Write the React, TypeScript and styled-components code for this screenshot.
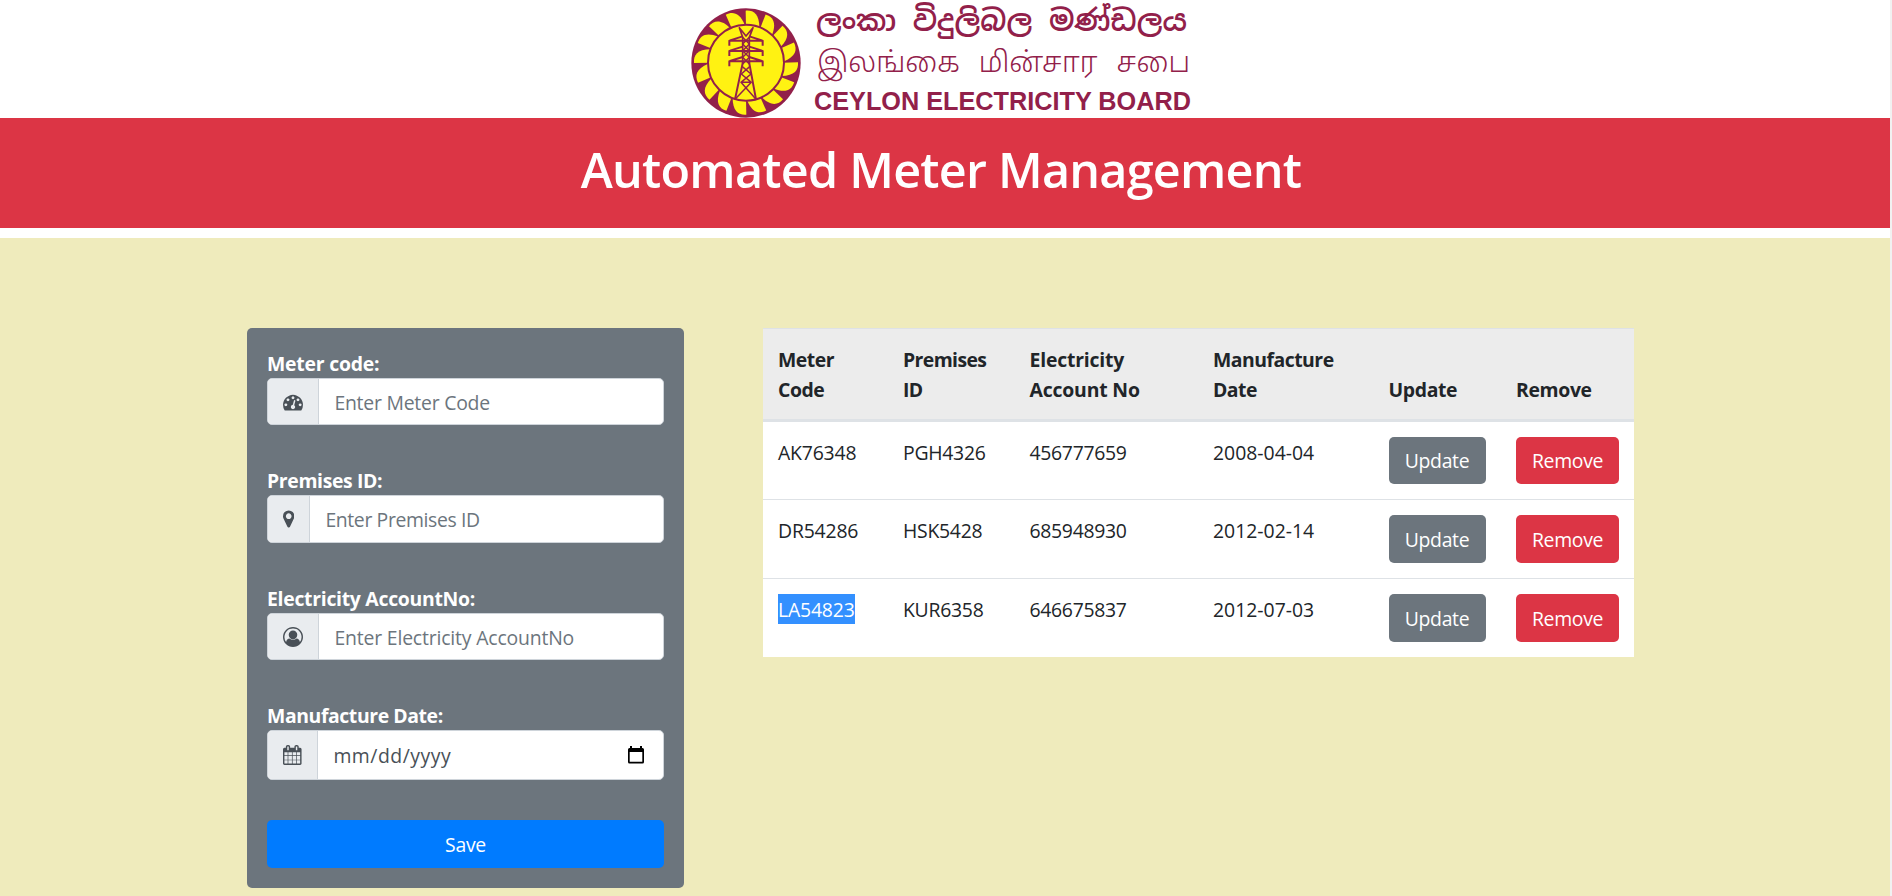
import React from "react";
import styled, { createGlobalStyle } from "styled-components";

const GlobalStyle = createGlobalStyle`
  *, *::before, *::after { box-sizing: border-box; }
  body {
    margin: 0;
    background: #fff;
    color: #212529;
    font-family: "Open Sans", "Noto Sans", sans-serif;
    font-size: 19.4px;
    line-height: 30px;
  }
`;

const Page = styled.div`
  height: 896px;
  display: flex;
  flex-direction: column;
  overflow: hidden;
  border-right: 2px solid #f1f1f1;
`;

const Brand = styled.header`
  height: 118px;
  flex: none;
  display: flex;
  padding-left: 680px;
  overflow: hidden;
  color: #92204a;
`;

const Emblem = styled.svg`
  width: 130px;
  height: 125px;
  flex: none;
`;

const BrandNames = styled.div`
  display: flex;
  flex-direction: column;
  padding-left: 4px;
  white-space: nowrap;
`;

const BrandName = styled.span<{ $size: number; $line: number; $gap?: number; $indent?: number; $weight: number }>`
  font-size: ${(p) => p.$size}px;
  line-height: ${(p) => p.$line}px;
  height: ${(p) => p.$line}px;
  padding-left: ${(p) => p.$indent ?? 0}px;
  word-spacing: ${(p) => p.$gap ?? 0}px;
  font-weight: ${(p) => p.$weight};
  font-family: "Liberation Sans", "Noto Sans Sinhala", "Noto Sans Tamil", sans-serif;
`;

const Banner = styled.div`
  height: 110px;
  flex: none;
  background: #dc3545;
  display: flex;
  justify-content: center;
  padding-top: 21px;
  padding-right: 8px;
`;

const Title = styled.h1`
  margin: 0;
  color: #fff;
  font-size: 48.5px;
  line-height: 60px;
  font-weight: 600;
  letter-spacing: -0.75px;
  white-space: nowrap;
`;

const Content = styled.main`
  flex: 1;
  margin-top: 10px;
  background: #efebbc;
  display: flex;
  align-items: flex-start;
  gap: 79px;
  padding: 90px 0 0 247px;
`;

const FormCard = styled.form`
  width: 437px;
  padding: 19.8px 20px 20px;
  border-radius: 5px;
  background: #6c757d;
  display: flex;
  flex-direction: column;
`;

const Field = styled.div`
  margin-bottom: 40px;
`;

const Label = styled.label<{ $spacing: number }>`
  display: block;
  height: 30px;
  padding-top: 1px;
  color: #fff;
  font-weight: 700;
  letter-spacing: ${(p) => p.$spacing}px;
`;

const InputGroup = styled.div<{ $height: number }>`
  height: ${(p) => p.$height}px;
  display: flex;
  border: 1px solid #ced4da;
  border-radius: 5px;
  background: #fff;
  overflow: hidden;
`;

const Addon = styled.span<{ $width: number }>`
  width: ${(p) => p.$width}px;
  flex: none;
  display: flex;
  align-items: center;
  justify-content: center;
  background: #e9ecef;
  border-right: 1px solid #ced4da;
  color: #495057;
`;

const Icon = styled.svg`
  height: 20px;
  flex: none;
  fill: currentColor;
`;

const Control = styled.span<{ $spacing: number; $dark?: boolean }>`
  flex: 1;
  display: flex;
  align-items: center;
  justify-content: space-between;
  padding: 2.2px 19px 0 15.4px;
  color: ${(p) => (p.$dark ? "#495057" : "#6c757d")};
  letter-spacing: ${(p) => p.$spacing}px;
`;

const PickerIcon = styled.svg`
  width: 16px;
  height: 18px;
  margin-bottom: 2px;
`;

const Button = styled.button<{ $tone: string; $width?: number }>`
  display: block;
  width: ${(p) => (p.$width ? `${p.$width}px` : "100%")};
  height: 48px;
  border: 0;
  border-radius: 5px;
  padding: 2px 0 0;
  background: ${(p) => p.$tone};
  color: #fff;
  font: inherit;
  letter-spacing: -0.3px;
`;

const Table = styled.table`
  width: 871px;
  table-layout: fixed;
  border-collapse: separate;
  border-spacing: 0;
  background: #fff;
`;

const HeadCell = styled.th<{ $width: number; $spacing: number }>`
  width: ${(p) => p.$width}px;
  height: 94px;
  padding: 16px 14px 14px 15px;
  border-top: 1px solid #dee2e6;
  border-bottom: 3px solid #dee2e6;
  background: #ececec;
  font-weight: 700;
  text-align: left;
  vertical-align: bottom;
  white-space: pre-line;
  letter-spacing: ${(p) => p.$spacing}px;
`;

const Row = styled.tr`
  & + & > td {
    border-top: 1px solid #dee2e6;
  }
  &:first-child ${Button} {
    height: 47px;
    padding-top: 0.5px;
  }
`;

const Cell = styled.td<{ $spacing?: number }>`
  padding: 16px 0 14px 15px;
  vertical-align: top;
  white-space: nowrap;
  letter-spacing: ${(p) => p.$spacing ?? -0.3}px;
`;

const ActionCell = styled(Cell)`
  padding: 15px 0 15px 15px;
`;

const Selected = styled.span`
  display: block;
  width: 77px;
  height: 30px;
  margin-top: -1px;
  padding-top: 1px;
  background: #3390ff;
  color: #fff;
`;

const icons = {
  gauge: {
    box: "0 0 1792 1792",
    d: "M384 1152q0-53-37.5-90.5t-90.5-37.5-90.5 37.5-37.5 90.5 37.5 90.5 90.5 37.5 90.5-37.5 37.5-90.5zm192-448q0-53-37.5-90.5t-90.5-37.5-90.5 37.5-37.5 90.5 37.5 90.5 90.5 37.5 90.5-37.5 37.5-90.5zm428 481l101-382q6-26-7.5-48.5t-38.5-29.5-48 6.5-30 39.5l-101 382q-60 5-107 43.5t-63 98.5q-20 77 20 146t117 89 146-20 89-117q16-60-6-117t-72-91zm660-33q0-53-37.5-90.5t-90.5-37.5-90.5 37.5-37.5 90.5 37.5 90.5 90.5 37.5 90.5-37.5 37.5-90.5zm-640-640q0-53-37.5-90.5t-90.5-37.5-90.5 37.5-37.5 90.5 37.5 90.5 90.5 37.5 90.5-37.5 37.5-90.5zm448 192q0-53-37.5-90.5t-90.5-37.5-90.5 37.5-37.5 90.5 37.5 90.5 90.5 37.5 90.5-37.5 37.5-90.5zm320 448q0 261-141 483-19 29-54 29h-1402q-35 0-54-29-141-221-141-483 0-182 71-348t191-286 286-191 348-71 348 71 286 191 191 286 71 348z",
  },
  marker: {
    box: "384 0 1024 1792",
    d: "M1152 640q0-106-75-181t-181-75-181 75-75 181 75 181 181 75 181-75 75-181zm256 0q0 109-33 179l-364 774q-16 33-47.5 52t-67.5 19-67.5-19-46.5-52l-365-774q-33-70-33-179 0-212 150-362t362-150 362 150 150 362z",
  },
  user: {
    box: "0 0 1792 1792",
    d: "M896 0q182 0 348 71t286 191 191 286 71 348q0 181-70.5 347t-190.5 286-286 191.5-349 71.5-349-71-285.5-191.5-190.5-286-71-347.5 71-348 191-286 286-191 348-71zm619 1351q149-205 149-455 0-156-61-298t-164-245-245-164-298-61-298 61-245 164-164 245-61 298q0 250 149 455 66-327 306-327 131 128 313 128t313-128q240 0 306 327zm-235-647q0-159-112.5-271.5t-271.5-112.5-271.5 112.5-112.5 271.5 112.5 271.5 271.5 112.5 271.5-112.5 112.5-271.5z",
  },
  calendar: {
    box: "64 0 1664 1792",
    d: "M192 1664h288v-288h-288v288zm352 0h320v-288h-320v288zm-352-352h288v-320h-288v320zm352 0h320v-320h-320v320zm-352-384h288v-288h-288v288zm736 736h320v-288h-320v288zm-384-736h320v-288h-320v288zm768 736h288v-288h-288v288zm-384-352h320v-320h-320v320zm-352-864v-288q0-13-9.5-22.5t-22.5-9.5h-64q-13 0-22.5 9.5t-9.5 22.5v288q0 13 9.5 22.5t22.5 9.5h64q13 0 22.5-9.5t9.5-22.5zm736 864h288v-320h-288v320zm-384-384h320v-288h-320v288zm384 0h288v-288h-288v288zm32-480v-288q0-13-9.5-22.5t-22.5-9.5h-64q-13 0-22.5 9.5t-9.5 22.5v288q0 13 9.5 22.5t22.5 9.5h64q13 0 22.5-9.5t9.5-22.5zm384-64v1280q0 52-38 90t-90 38h-1408q-52 0-90-38t-38-90v-1280q0-52 38-90t90-38h128v-96q0-66 47-113t113-47h64q66 0 113 47t47 113v96h384v-96q0-66 47-113t113-47h64q66 0 113 47t47 113v96h128q52 0 90 38t38 90z",
  },
};

type IconName = keyof typeof icons;

const fields: {
  label: string;
  labelSpacing: number;
  text: string;
  spacing: number;
  icon: IconName;
  addon: number;
  date?: boolean;
}[] = [
  { label: "Meter code:", labelSpacing: -0.22, text: "Enter Meter Code", spacing: -0.23, icon: "gauge", addon: 51 },
  { label: "Premises ID:", labelSpacing: -0.35, text: "Enter Premises ID", spacing: -0.37, icon: "marker", addon: 42 },
  { label: "Electricity AccountNo:", labelSpacing: -0.28, text: "Enter Electricity AccountNo", spacing: -0.17, icon: "user", addon: 51 },
  { label: "Manufacture Date:", labelSpacing: -0.4, text: "mm/dd/yyyy", spacing: 0.5, icon: "calendar", addon: 50, date: true },
];

const columns = [
  { title: "Meter\nCode", width: 125, spacing: -0.45 },
  { title: "Premises\nID", width: 126.5, spacing: -0.6 },
  { title: "Electricity\nAccount No", width: 183.5, spacing: -0.18 },
  { title: "Manufacture\nDate", width: 175.5, spacing: -0.5 },
  { title: "Update", width: 127.5, spacing: -0.35 },
  { title: "Remove", width: 133, spacing: -0.35 },
];

const meters = [
  { code: "AK76348", premises: "PGH4326", account: "456777659", date: "2008-04-04" },
  { code: "DR54286", premises: "HSK5428", account: "685948930", date: "2012-02-14" },
  { code: "LA54823", premises: "KUR6358", account: "646675837", date: "2012-07-03", selected: true },
];

function BoardEmblem() {
  const blades = Array.from({ length: 16 }, (_, i) => i * 22.5);
  return (
    <Emblem viewBox="0 0 390 375">
      <circle cx="198" cy="189" r="164" fill="#92204a" />
      <g fill="#fff212">
        {blades.map((a) => (
          <path key={a} transform={`translate(198 188) rotate(${a})`} d="M-1 -156 C22 -158 40 -146 40 -106 L0 -108 Z" />
        ))}
      </g>
      <circle cx="198" cy="188" r="114" fill="#fff212" stroke="#92204a" strokeWidth="6" />
      <g fill="none" stroke="#92204a" strokeWidth="5" strokeLinejoin="round">
        <path d="M188 190V112L178 83L198 108L219 83L208 112V190" />
        <path d="M189 185L165 298M207 185L228 298" strokeWidth="6" />
        <path d="M188 112L208 132L188 152L208 172L188 192M208 112L188 132L208 152L188 172L208 192" strokeWidth="4.5" />
        <path d="M187 200L213 222L183 247H214L184 222L209 200M183 247L228 298M214 247L165 298" strokeWidth="4.5" />
        {[122, 153, 184].map((y) => (
          <path key={y} strokeWidth="6" d={`M148 ${y + 15}V${y}H248V${y + 15}M150 ${y - 1}L188 ${y - 13}M246 ${y - 1}L208 ${y - 13}`} />
        ))}
      </g>
    </Emblem>
  );
}

function DatePickerIcon() {
  return (
    <PickerIcon viewBox="0 0 16 18">
      <path d="M2 0h2v2h8V0h2v2h.5A1.500 1.500 0 0 1 16 3.500V16a1.500 1.500 0 0 1-1.500 1.500H1.500A1.500 1.500 0 0 1 0 16V3.500A1.500 1.500 0 0 1 1.500 2H2zM1.700 6v9.800h12.600V6z" fill="#000" fillRule="evenodd" />
    </PickerIcon>
  );
}

export default function App() {
  return (
    <>
      <GlobalStyle />
      <Page>
        <Brand>
          <BoardEmblem />
          <BrandNames>
            <BrandName $size={29.3} $line={41} $weight={600} $gap={8.5} $indent={2}>ලංකා විදුලිබල මණ්ඩලය</BrandName>
            <BrandName $size={28.6} $line={43} $weight={300} $gap={11} $indent={3}>இலங்கை மின்சார சபை</BrandName>
            <BrandName $size={25.25} $line={35} $weight={700}>CEYLON ELECTRICITY BOARD</BrandName>
          </BrandNames>
        </Brand>
        <Banner>
          <Title>Automated Meter Management</Title>
        </Banner>
        <Content>
          <FormCard>
            {fields.map((f) => (
              <Field key={f.label}>
                <Label $spacing={f.labelSpacing}>{f.label}</Label>
                <InputGroup $height={f.date ? 50 : 47.5}>
                  <Addon $width={f.addon}>
                    <Icon viewBox={icons[f.icon].box}>
                      <path d={icons[f.icon].d} />
                    </Icon>
                  </Addon>
                  <Control $spacing={f.spacing} $dark={f.date}>
                    {f.text}
                    {f.date && <DatePickerIcon />}
                  </Control>
                </InputGroup>
              </Field>
            ))}
            <Button type="button" $tone="#007bff">Save</Button>
          </FormCard>
          <Table>
            <thead>
              <tr>
                {columns.map((c) => (
                  <HeadCell key={c.title} $width={c.width} $spacing={c.spacing}>{c.title}</HeadCell>
                ))}
              </tr>
            </thead>
            <tbody>
              {meters.map((m) => (
                <Row key={m.code}>
                  <Cell $spacing={-0.18}>{m.selected ? <Selected>{m.code}</Selected> : m.code}</Cell>
                  <Cell $spacing={-0.26}>{m.premises}</Cell>
                  <Cell>{m.account}</Cell>
                  <Cell $spacing={0}>{m.date}</Cell>
                  <ActionCell><Button $tone="#6c757d" $width={97}>Update</Button></ActionCell>
                  <ActionCell><Button $tone="#dc3545" $width={103}>Remove</Button></ActionCell>
                </Row>
              ))}
            </tbody>
          </Table>
        </Content>
      </Page>
    </>
  );
}
